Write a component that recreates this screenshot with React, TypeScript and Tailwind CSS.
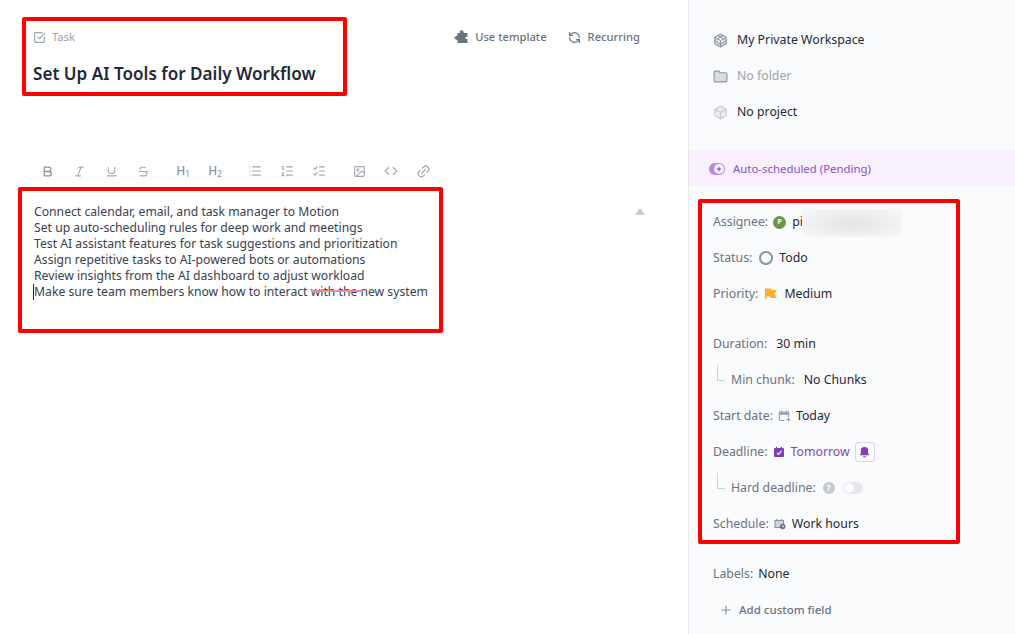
import {
  Bold,
  Box,
  Code,
  Image,
  Italic,
  Link2,
  List,
  ListChecks,
  ListOrdered,
  Plus,
  RefreshCcw,
  SquareCheckBig,
  Strikethrough,
  Underline,
} from 'lucide-react';
import type { ReactNode } from 'react';

const lines = [
  'Connect calendar, email, and task manager to Motion',
  'Set up auto-scheduling rules for deep work and meetings',
  'Test AI assistant features for task suggestions and prioritization',
  'Assign repetitive tasks to AI-powered bots or automations',
  'Review insights from the AI dashboard to adjust workload',
];

const Tool = ({ children }: { children: ReactNode }) => (
  <span className="flex h-6 w-8 items-center justify-center text-[#a3a9b2]">{children}</span>
);

const Heading = ({ n }: { n: number }) => (
  <span className="text-[12px] font-medium text-[#8b929c]">
    H<sub className="text-[8px]">{n}</sub>
  </span>
);

const Row = ({ label, children }: { label: string; children: ReactNode }) => (
  <div className="flex h-9 items-center text-[12.3px] text-[#1f2937]">
    <span className="text-[#6b7280]">{label}</span>
    {children}
  </div>
);

const Elbow = () => <span className="mr-[6px] mb-[15px] ml-[4px] h-4 w-2 border-b border-l border-[#d1d5db]" />;

const StartIcon = () => (
  <svg viewBox="0 0 12 12" className="mr-[6px] ml-[5px] h-3 w-3 text-[#9ca3af]" fill="none" stroke="currentColor" strokeWidth="1.2">
    <path d="M6.500 10.500H2.500a1 1 0 01-1-1V3.500h9V7" />
    <path d="M1.500 2.200h9v2h-9zM3.500 .8v1.500M8.500 .8v1.500" fill="currentColor" />
    <path d="M8 9.500h3.500M10 8l1.500 1.500L10 11" />
  </svg>
);

const DeadlineIcon = () => (
  <svg viewBox="0 0 12 12" className="mr-[6px] ml-[5px] h-3 w-3">
    <rect x="1" y="2" width="10" height="9" rx="1.200" fill="#7e3fb5" />
    <path d="M3.500 .8v2M8.500 .8v2" stroke="#7e3fb5" strokeWidth="1.300" />
    <path d="M4 7l1.500 1.300L8.500 5" fill="none" stroke="#f3e8fb" strokeWidth="1.200" />
  </svg>
);

const ScheduleIcon = () => (
  <svg viewBox="0 0 12 12" className="mr-[6px] ml-[5px] h-3 w-3">
    <path d="M1 2.500h8.500v7H1z" fill="#d1d5db" stroke="#8b929c" strokeWidth="1.100" />
    <path d="M3 1v2M7.500 1v2" stroke="#8b929c" strokeWidth="1.200" />
    <circle cx="8.700" cy="8.500" r="2.800" fill="#6b7280" />
    <path d="M8.700 7v1.700h1.300" fill="none" stroke="#fff" strokeWidth="0.800" />
  </svg>
);

export default function App() {
  return (
    <div className="relative flex h-[634px] w-[1015px] overflow-hidden bg-white font-['Noto_Sans',sans-serif]">
      <main className="w-[688px] shrink-0">
        <div className="flex h-[132px] justify-between pt-[29px] pr-[48px] pl-[33px]">
          <div>
            <div className="flex h-4 items-center gap-[6px] text-[11.200px] text-[#9ca3af]">
              <SquareCheckBig size={13} strokeWidth={2.200} />
              Task
            </div>
            <h1 className="mt-[17px] text-[17.100px] leading-6 font-semibold text-[#1f2937]">
              Set Up AI Tools for Daily Workflow
            </h1>
          </div>
          <div className="flex h-4 items-center gap-[21px] text-[11.200px] font-medium text-[#6b7280]">
            <span className="flex items-center gap-[7px]">
              <svg viewBox="0 0 14 14" className="h-[14px] w-[14px] fill-[#6b7280]">
                <path d="M5.500 .5h3.500l1 2.500h3.500v3.800h-1.300c-1 0-1 2.200 0 2.200h1.300v4H3.500v-2.500c0-1-3-1-3-2.600s3-1.600 3-2.600V3h2.200c.6 0 .4-1.500-.2-2.500z" />
              </svg>
              Use template
            </span>
            <span className="flex items-center gap-[7px]">
              <RefreshCcw size={13} strokeWidth={2.200} />
              Recurring
            </span>
          </div>
        </div>
        <div className="mt-[27px] flex items-center pl-[31px]">
          <div className="flex">
            <Tool><Bold size={13} strokeWidth={2.400} className="text-[#8b929c]" /></Tool>
            <Tool><Italic size={13} /></Tool>
            <Tool><Underline size={13} /></Tool>
            <Tool><Strikethrough size={13} /></Tool>
          </div>
          <div className="ml-2 flex">
            <Tool><Heading n={1} /></Tool>
            <Tool><Heading n={2} /></Tool>
          </div>
          <div className="ml-2 flex">
            <Tool><List size={14} /></Tool>
            <Tool><ListOrdered size={14} /></Tool>
            <Tool><ListChecks size={14} /></Tool>
          </div>
          <div className="ml-2 flex">
            <Tool><Image size={13} /></Tool>
            <Tool><Code size={14} /></Tool>
            <Tool><Link2 size={15} className="-rotate-45" /></Tool>
          </div>
        </div>
        <div className="relative mt-[21px] pl-[34px] text-[12.200px] leading-4 text-[#374151]">
          {lines.map((line) => (
            <p key={line}>{line}</p>
          ))}
          <p className="relative">
            <span className="absolute top-0 -left-px h-4 w-px bg-[#1f2937]" />
            Make sure team members know how to interact with the new system
            <span className="absolute top-[6px] left-[277px] h-[2px] w-[52px] bg-[#f08a9b]" />
          </p>
          <span className="absolute top-[4px] left-[635px] h-0 w-0 border-x-[5px] border-b-[7px] border-x-transparent border-b-[#c5cad1]" />
        </div>
      </main>

      <aside className="flex-1 border-l border-[#e5e7eb] bg-[#fafbfd]">
        <div className="flex flex-col pt-[22px] pl-[24px] text-[12.300px] text-[#1f2937]">
          <div className="flex h-9 items-center gap-[9px]">
            <svg viewBox="0 0 14 14" className="h-[15px] w-[15px]" fill="#c9cdd3" stroke="#8b929c" strokeWidth="0.900">
              <path d="M7 .8l5.400 3v6.400L7 13.200l-5.400-3V3.800zM1.600 3.800L7 7l5.400-3.200M7 7v6.200M4.300 2.300L9.700 5.400M9.700 2.300L4.300 5.400M1.600 7L7 10l5.400-3" />
            </svg>
            My Private Workspace
          </div>
          <div className="flex h-9 items-center gap-[9px] text-[#9ca3af]">
            <svg viewBox="0 0 14 14" className="h-[15px] w-[15px]" fill="#d9dbdf" stroke="#8b929c" strokeWidth="1">
              <path d="M1 3a1 1 0 011-1h3.500l1 1.500H12a1 1 0 011 1V11a1 1 0 01-1 1H2a1 1 0 01-1-1z" />
            </svg>
            No folder
          </div>
          <div className="flex h-9 items-center gap-[9px]">
            <Box size={15} fill="#eceef1" stroke="#c9cdd3" />
            No project
          </div>
        </div>
        <div className="mt-[20px] flex h-9 items-center gap-2 bg-[#f8f0fd] pt-[2px] pl-[20px] text-[11.400px] text-[#8b4fc9]">
          <svg viewBox="0 0 16 12" className="h-3 w-4">
            <rect width="16" height="12" rx="6" fill="#b58ade" />
            <circle cx="10" cy="6" r="5" fill="#f8f0fd" />
            <path d="M10 3l.7 2.300L13 6l-2.300.7L10 9l-.7-2.300L7 6l2.300-.7z" fill="#8b4fc9" />
          </svg>
          Auto-scheduled (Pending)
        </div>
        <div className="mt-[18px] pl-[24px]">
          <Row label="Assignee:">
            <span className="mr-[6px] ml-[5px] flex h-[13px] w-[13px] items-center justify-center rounded-full bg-[#6d9644] text-[7px] font-bold text-white">
              P
            </span>
            pi
          </Row>
          <Row label="Status:">
            <span className="mr-[6px] ml-[7px] h-[14px] w-[14px] rounded-full border-2 border-[#8b929c]" />
            Todo
          </Row>
          <Row label="Priority:">
            <svg viewBox="0 0 12 12" className="mr-[7px] ml-[7px] h-3 w-3 fill-[#fbb034]">
              <path d="M0 .5h6l1 1.500h5L9.500 6 12 10H6L5 8.500H1.500V11H0z" />
            </svg>
            Medium
          </Row>
          <div className="h-[14px]" />
          <Row label="Duration:">
            <span className="ml-[9px]">30 min</span>
          </Row>
          <Row label="">
            <Elbow />
            <span className="text-[#6b7280]">Min chunk:</span>
            <span className="ml-[9px]">No Chunks</span>
          </Row>
          <Row label="Start date:">
            <StartIcon />
            Today
          </Row>
          <Row label="Deadline:">
            <DeadlineIcon />
            <span className="text-[#7e4bb5]">Tomorrow</span>
            <span className="ml-[5px] flex h-5 w-5 items-center justify-center rounded-[3px] border border-[#e5cff5]">
              <svg viewBox="0 0 12 12" className="h-[11px] w-[11px] fill-[#7e3fb5]">
                <path d="M6 0a4 4 0 00-4 4v3L1 9h10L10 7V4a4 4 0 00-4-4zM4.500 10h3a1.500 1.500 0 01-3 0z" />
              </svg>
            </span>
          </Row>
          <Row label="">
            <Elbow />
            <span className="text-[#6b7280]">Hard deadline:</span>
            <span className="mr-2 ml-[7px] flex h-3 w-3 items-center justify-center rounded-full bg-[#c5cad1] text-[9px] font-bold text-white">
              ?
            </span>
            <span className="flex h-3 w-5 items-center rounded-full bg-[#e5e7eb] pl-px">
              <span className="h-[10px] w-[10px] rounded-full bg-white" />
            </span>
          </Row>
          <Row label="Schedule:">
            <ScheduleIcon />
            Work hours
          </Row>
          <div className="h-[14px]" />
          <Row label="Labels:">
            <span className="ml-[5px]">None</span>
          </Row>
          <div className="flex h-9 items-center gap-[6px] pl-[6px] text-[11.500px] font-medium text-[#6b7280]">
            <Plus size={14} className="text-[#8b929c]" />
            Add custom field
          </div>
        </div>
      </aside>

      {/* redaction and annotation overlays */}
      <div className="absolute top-[209px] left-[802px] h-[28px] w-[100px] bg-[radial-gradient(ellipse_at_center,#e4e4e6,#f8f8fa)]" />
      <div className="pointer-events-none absolute top-[17px] left-[22px] h-[79px] w-[325px] rounded-[2px] border-4 border-[#fe0000]" />
      <div className="pointer-events-none absolute top-[187px] left-[18px] h-[146px] w-[425px] rounded-[2px] border-4 border-[#fe0000]" />
      <div className="pointer-events-none absolute top-[199px] left-[698px] h-[345px] w-[262px] rounded-[2px] border-4 border-[#fe0000]" />
    </div>
  );
}
